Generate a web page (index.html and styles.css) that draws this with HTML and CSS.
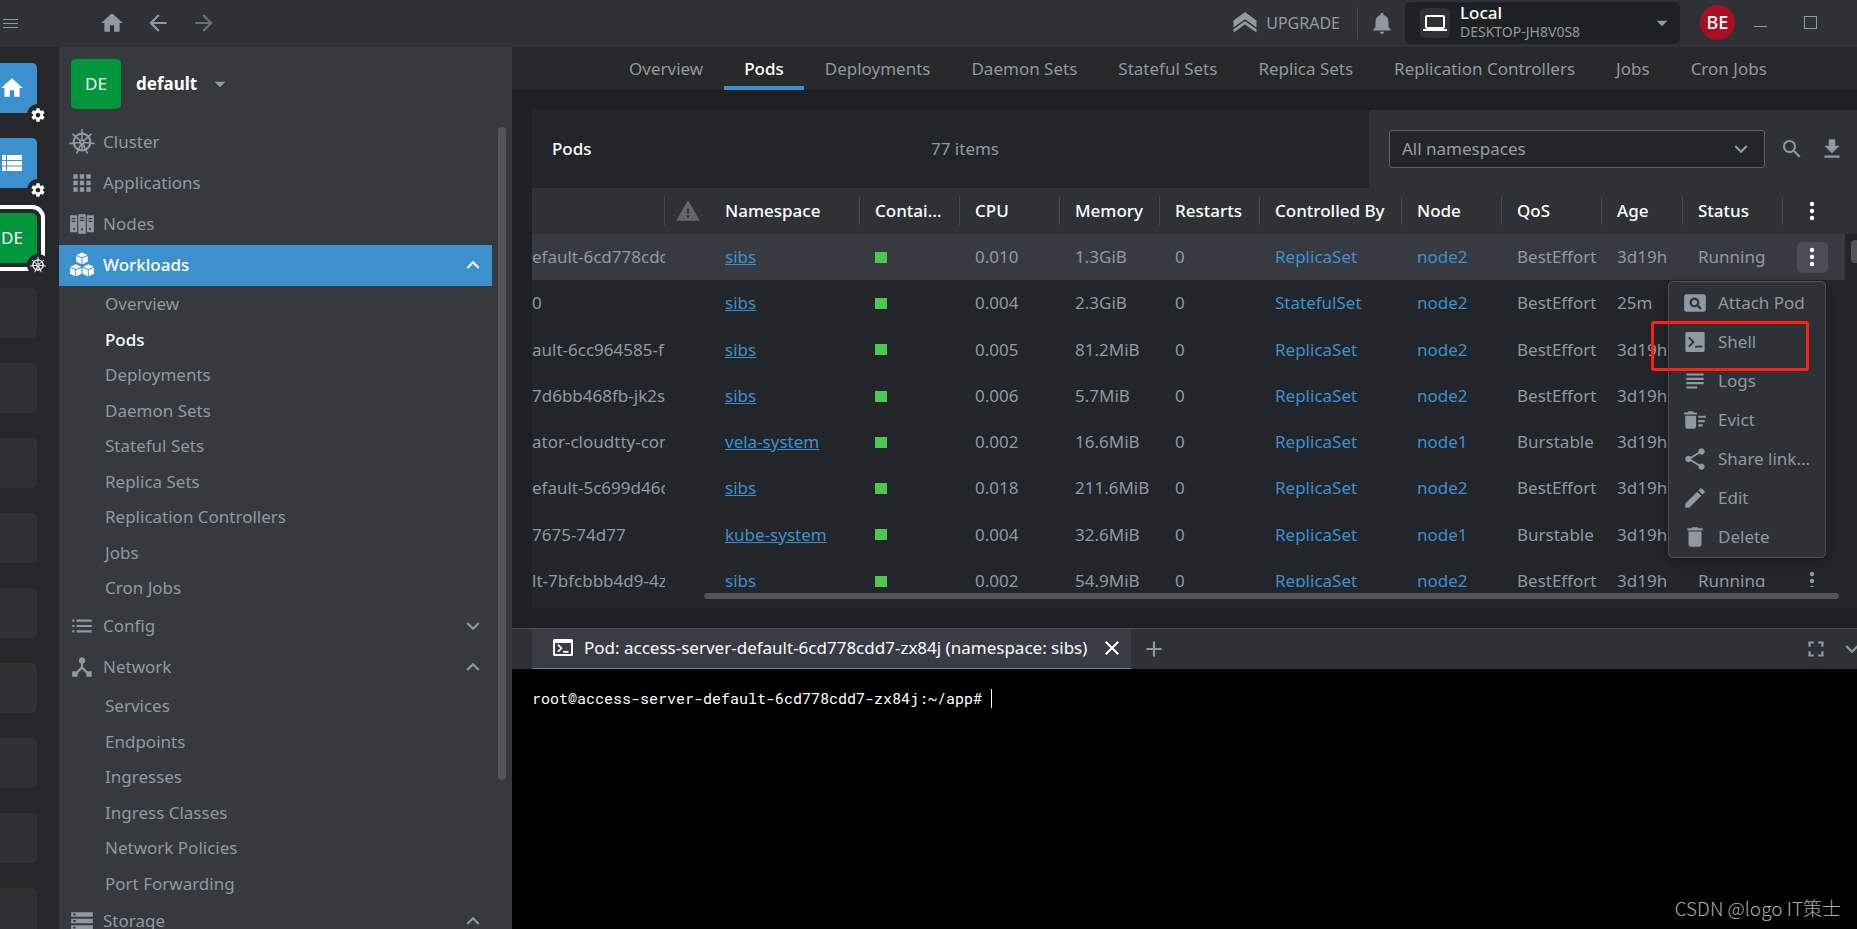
FILE: index.html
```html
<!DOCTYPE html>
<html lang="en">
<head>
<meta charset="utf-8">
<title>Pods - default</title>
<link rel="stylesheet" href="styles.css">
</head>
<body>
<svg class="sprite" aria-hidden="true">
  <symbol id="home" viewBox="0 0 24 24"><path d="M10 20v-6h4v6h5v-8h3L12 3 2 12h3v8z"/></symbol>
  <symbol id="back" viewBox="0 0 24 24"><path d="M20 11H7.83l5.59-5.59L12 4l-8 8 8 8 1.41-1.41L7.83 13H20z"/></symbol>
  <symbol id="forward" viewBox="0 0 24 24"><path d="M4 11h12.17l-5.59-5.59L12 4l8 8-8 8-1.41-1.41L16.17 13H4z"/></symbol>
  <symbol id="burger" viewBox="0 0 16 12"><path d="M0 2h15v1H0zM0 6h15v1H0zM0 10h15v1H0z"/></symbol>
  <symbol id="upgrade" viewBox="0 0 24 21"><path d="M12 0l11.500 8.500v7L12 7.200.5 15.500v-7z"/><path d="M12 9l11.500 8.300V20.500L12 12.600.5 20.500v-3.200z"/></symbol>
  <symbol id="bell" viewBox="0 0 24 24"><path d="M12 22c1.100 0 2-.9 2-2h-4c0 1.100.89 2 2 2zm6-6v-5c0-3.070-1.640-5.640-4.500-6.320V4c0-.83-.67-1.500-1.500-1.500s-1.500.67-1.500 1.500v.68C7.630 5.360 6 7.920 6 11v5l-2 2v1h16v-1l-2-2z"/></symbol>
  <symbol id="laptop" viewBox="0 0 24 24"><path d="M20 18c1.100 0 2-.9 2-2V6c0-1.100-.9-2-2-2H4c-1.100 0-2 .9-2 2v10c0 1.100.9 2 2 2H0v2h24v-2h-4zM4 6h16v10H4V6z"/></symbol>
  <symbol id="caret" viewBox="0 0 24 24"><path d="M7 10l5 5 5-5z"/></symbol>
  <symbol id="up" viewBox="0 0 24 24"><path d="M12 8l-6 6 1.410 1.410L12 10.830l4.590 4.580L18 14z"/></symbol>
  <symbol id="down" viewBox="0 0 24 24"><path d="M16.590 8.590L12 13.170 7.410 8.590 6 10l6 6 6-6z"/></symbol>
  <symbol id="gear" viewBox="0 0 24 24"><path d="M19.430 12.980c.04-.32.07-.64.07-.98s-.03-.66-.07-.98l2.110-1.650c.19-.15.24-.42.12-.64l-2-3.460c-.12-.22-.39-.3-.61-.22l-2.490 1c-.52-.4-1.080-.73-1.690-.98l-.38-2.650C14.460 2.180 14.250 2 14 2h-4c-.25 0-.46.18-.49.42l-.38 2.650c-.61.25-1.170.59-1.690.98l-2.490-1c-.23-.09-.49 0-.61.22l-2 3.460c-.13.22-.07.49.12.64l2.110 1.650c-.04.32-.07.65-.07.98s.03.66.07.98l-2.110 1.650c-.19.15-.24.42-.12.64l2 3.460c.12.22.39.3.61.22l2.490-1c.52.4 1.080.73 1.690.98l.38 2.650c.03.24.24.42.49.42h4c.25 0 .46-.18.49-.42l.38-2.650c.61-.25 1.170-.59 1.690-.98l2.490 1c.23.09.49 0 .61-.22l2-3.460c.12-.22.07-.49-.12-.64l-2.110-1.650zM12 15.500c-1.930 0-3.500-1.570-3.500-3.500s1.570-3.500 3.500-3.500 3.500 1.570 3.500 3.500-1.570 3.500-3.500 3.500z"/></symbol>
  <symbol id="rows" viewBox="0 0 24 24"><path d="M2 4h4v5H2zM7 4h15v5H7zM2 10h4v4.500H2zM7 10h15v4.500H7zM2 15.500h4V20H2zM7 15.500h15V20H7z"/></symbol>
  <symbol id="helm" viewBox="0 0 24 24"><g fill="none" stroke="currentColor"><circle cx="12" cy="12" r="7.700" stroke-width="2"/><circle cx="12" cy="12" r="1.800" stroke-width="1.600"/><path stroke-width="1.500" d="M12 0v10M12 14v6M3.200 4.600l7.200 6.100M20.800 4.600l-7.200 6.100M.3 13.500l9.800-1.100M23.700 13.500l-9.800-1.100M7 22.800l4.100-9M17 22.800l-4.100-9"/></g></symbol>
  <symbol id="apps" viewBox="0 0 24 24"><path d="M4 8h4V4H4v4zm6 12h4v-4h-4v4zm-6 0h4v-4H4v4zm0-6h4v-4H4v4zm6 0h4v-4h-4v4zm6-10v4h4V4h-4zm-6 4h4V4h-4v4zm6 6h4v-4h-4v4zm0 6h4v-4h-4v4z"/></symbol>
  <symbol id="nodes" viewBox="0 0 24 24"><path fill-rule="evenodd" d="M1 4h6.500v15.500H1zM2.500 6.500v1.200h3.500V6.500zM2.500 9v1.200h3.500V9zM4 15.500v2h1.500v-2zM8.500 3h7v18h-7zM10 5.500v1.200h4V5.500zM10 8v1.200h4V8zM11.300 16v2h1.500v-2zM16.500 4H23v15.500h-6.500zM18 6.500v1.200h3.500V6.500zM18 9v1.200h3.500V9zM18.500 15.500v2H20v-2z"/></symbol>
  <symbol id="cubes" viewBox="0 0 24 24"><path d="M12 .5l5 2.300-5 2.300-5-2.300zM6.700 3.600l4.900 2.200v5.600L6.700 9.100zM17.300 3.600l-4.900 2.200v5.600l4.900-2.300zM6.200 11.300l5 2.300-5 2.300-5-2.300zM.9 14.500l4.900 2.200v5.700L.9 20.100zM11.500 14.500l-4.900 2.200v5.700l4.900-2.300zM17.800 11.300l5 2.300-5 2.300-5-2.300zM12.500 14.500l4.900 2.200v5.700l-4.900-2.300zM23.100 14.500l-4.900 2.200v5.700l4.900-2.300z"/></symbol>
  <symbol id="list" viewBox="0 0 24 24"><path d="M3 6h2v2H3zM3 11h2v2H3zM3 16h2v2H3zM7 6h14v2H7zM7 11h14v2H7zM7 16h14v2H7z"/></symbol>
  <symbol id="hub" viewBox="0 0 24 24"><path d="M17 16l-4-4V8.820C14.160 8.400 15 7.300 15 6c0-1.660-1.340-3-3-3S9 4.340 9 6c0 1.300.84 2.400 2 2.820V12l-4 4H3v5h5v-3.050l4-4.200 4 4.200V21h5v-5h-4z"/></symbol>
  <symbol id="storage" viewBox="0 0 24 24"><path d="M2 20h20v-4H2v4zm2-3h2v2H4v-2zM2 4v4h20V4H2zm4 3H4V5h2v2zm-4 7h20v-4H2v4zm2-3h2v2H4v-2z"/></symbol>
  <symbol id="warning" viewBox="0 0 24 24"><path d="M1 21h22L12 2 1 21zm12-3h-2v-2h2v2zm0-4h-2v-4h2v4z"/></symbol>
  <symbol id="search" viewBox="0 0 24 24"><path d="M15.500 14h-.79l-.28-.27C15.410 12.590 16 11.110 16 9.500 16 5.910 13.090 3 9.500 3S3 5.910 3 9.500 5.910 16 9.500 16c1.610 0 3.090-.59 4.230-1.570l.27.28v.79l5 4.990L20.490 19l-4.990-5zm-6 0C7.010 14 5 11.990 5 9.500S7.010 5 9.500 5 14 7.010 14 9.500 11.990 14 9.500 14z"/></symbol>
  <symbol id="download" viewBox="0 0 24 24"><path d="M19 9h-4V3H9v6H5l7 7 7-7zM5 18v2h14v-2H5z"/></symbol>
  <symbol id="kebab" viewBox="0 0 24 24"><circle cx="12" cy="5" r="2.200"/><circle cx="12" cy="12" r="2.200"/><circle cx="12" cy="19" r="2.200"/></symbol>
  <symbol id="attach" viewBox="0 0 24 24"><path d="M11.500 9C10.120 9 9 10.120 9 11.500s1.120 2.500 2.500 2.500 2.500-1.120 2.500-2.500S12.880 9 11.500 9zM20 4H4c-1.100 0-2 .9-2 2v12c0 1.100.9 2 2 2h16c1.100 0 2-.9 2-2V6c0-1.100-.9-2-2-2zm-3.210 14.210l-2.910-2.910c-.69.44-1.510.7-2.390.7C9.010 16 7 13.990 7 11.500S9.010 7 11.500 7 16 9.010 16 11.500c0 .88-.26 1.690-.7 2.390l2.910 2.900-1.420 1.420z"/></symbol>
  <symbol id="shell" viewBox="0 0 24 24"><path fill-rule="evenodd" d="M3 1h18a1.500 1.500 0 0 1 1.500 1.500v19A1.500 1.500 0 0 1 21 23H3a1.500 1.500 0 0 1-1.500-1.500v-19A1.500 1.500 0 0 1 3 1zM6 6.200L4.600 7.600 9 12l-4.400 4.400L6 17.800l5.800-5.800zM12 16v2h8v-2z"/></symbol>
  <symbol id="subject" viewBox="0 0 24 24"><path d="M14 17H4v2h10v-2zm6-8H4v2h16V9zM4 15h16v-2H4v2zM4 5v2h16V5H4z"/></symbol>
  <symbol id="evict" viewBox="0 0 24 24"><path d="M15 16h4v2h-4zm0-8h7v2h-7zm0 4h6v2h-6zM3 18c0 1.100.9 2 2 2h6c1.100 0 2-.9 2-2V8H3v10zM14 5h-3l-1-1H6L5 5H2v2h12z"/></symbol>
  <symbol id="share" viewBox="0 0 24 24"><path d="M18 16.080c-.76 0-1.440.3-1.960.77L8.910 12.700c.05-.23.09-.46.09-.7s-.04-.47-.09-.7l7.050-4.110c.54.5 1.250.81 2.040.81 1.660 0 3-1.340 3-3s-1.340-3-3-3-3 1.340-3 3c0 .24.04.47.09.7L8.040 9.810C7.500 9.310 6.790 9 6 9c-1.660 0-3 1.340-3 3s1.340 3 3 3c.79 0 1.500-.31 2.040-.81l7.120 4.160c-.05.21-.08.43-.08.65 0 1.610 1.310 2.920 2.920 2.920s2.920-1.310 2.920-2.920-1.310-2.920-2.920-2.920z"/></symbol>
  <symbol id="edit" viewBox="0 0 24 24"><path d="M3 17.250V21h3.750L17.810 9.940l-3.750-3.750L3 17.250zM20.710 7.040c.39-.39.39-1.020 0-1.410l-2.340-2.340c-.39-.39-1.020-.39-1.410 0l-1.830 1.830 3.750 3.750 1.830-1.830z"/></symbol>
  <symbol id="trash" viewBox="0 0 24 24"><path d="M6 19c0 1.100.9 2 2 2h8c1.100 0 2-.9 2-2V7H6v12zM19 4h-3.500l-1-1h-5l-1 1H5v2h14V4z"/></symbol>
  <symbol id="terminal" viewBox="0 0 20 17"><path fill-rule="evenodd" d="M1.500 0h17A1.500 1.500 0 0 1 20 1.500v14a1.500 1.500 0 0 1-1.500 1.500h-17A1.500 1.500 0 0 1 0 15.500v-14A1.500 1.500 0 0 1 1.500 0zM2 4v11h16V4z"/><path d="M4.400 6.200l1.200-1.200L9.600 9.200l-4 4-1.200-1.200 2.800-2.800zM10 12h5.500v1.700H10z"/></symbol>
  <symbol id="close" viewBox="0 0 24 24"><path d="M19 6.410L17.590 5 12 10.590 6.410 5 5 6.410 10.590 12 5 17.590 6.410 19 12 13.410 17.590 19 19 17.590 13.410 12z"/></symbol>
  <symbol id="plus" viewBox="0 0 24 24"><path d="M19 13h-6v6h-2v-6H5v-2h6V5h2v6h6z"/></symbol>
  <symbol id="full" viewBox="0 0 24 24"><path d="M7 14H5v5h5v-2H7v-3zm-2-4h2V7h3V5H5v5zm12 7h-3v2h5v-5h-2v3zM14 5v2h3v3h2V5h-5z"/></symbol>
</svg>

<div class="app">
  <header class="topbar">
    <button class="icon-btn burger" aria-label="Menu"><svg><use href="#burger"/></svg></button>
    <nav class="history">
      <button class="icon-btn" aria-label="Home"><svg class="i26"><use href="#home"/></svg></button>
      <button class="icon-btn" aria-label="Back"><svg class="i26"><use href="#back"/></svg></button>
      <button class="icon-btn dim" aria-label="Forward" disabled><svg class="i26"><use href="#forward"/></svg></button>
    </nav>
    <button class="icon-btn upgrade"><svg><use href="#upgrade"/></svg>UPGRADE</button>
    <button class="icon-btn bell" aria-label="Notifications"><svg class="i26"><use href="#bell"/></svg></button>
    <button class="icon-btn host">
      <span class="host-icon"><svg class="i24"><use href="#laptop"/></svg></span>
      <span class="host-text"><b>Local</b><small>DESKTOP-JH8V0S8</small></span>
      <svg class="i26"><use href="#caret"/></svg>
    </button>
    <button class="icon-btn avatar">BE</button>
    <div class="window">
      <button class="icon-btn" aria-label="Minimize"><i class="min"></i></button>
      <button class="icon-btn" aria-label="Maximize"><i class="max"></i></button>
      <button class="icon-btn" aria-label="Close"><svg class="i20"><use href="#close"/></svg></button>
    </div>
  </header>

  <aside class="hotbar">
    <a class="cell blue" href="#catalog" aria-label="Catalog"><svg class="i26"><use href="#home"/></svg><span class="badge"><svg><use href="#gear"/></svg></span></a>
    <a class="cell blue" href="#list" aria-label="List"><svg class="i24"><use href="#rows"/></svg><span class="badge"><svg><use href="#gear"/></svg></span></a>
    <a class="cell green current" href="#default">DE<span class="badge"><svg><use href="#helm"/></svg></span></a>
    <div class="cell"></div><div class="cell"></div><div class="cell"></div><div class="cell"></div><div class="cell"></div>
    <div class="cell"></div><div class="cell"></div><div class="cell"></div><div class="cell"></div>
  </aside>

  <aside class="sidebar">
    <button class="icon-btn cluster"><span class="logo">DE</span><b>default</b><svg class="i26"><use href="#caret"/></svg></button>
    <nav class="tree">
      <a class="item" href="#cluster"><svg class="i26"><use href="#helm"/></svg>Cluster</a>
      <a class="item" href="#applications"><svg class="i26"><use href="#apps"/></svg>Applications</a>
      <a class="item" href="#nodes"><svg class="i26"><use href="#nodes"/></svg>Nodes</a>
      <a class="item active" href="#workloads"><svg class="i26"><use href="#cubes"/></svg>Workloads<svg class="i26 chev"><use href="#up"/></svg></a>
      <ul class="sub">
        <li><a href="#overview">Overview</a></li>
        <li><a class="on" href="#pods">Pods</a></li>
        <li><a href="#deployments">Deployments</a></li>
        <li><a href="#daemonsets">Daemon Sets</a></li>
        <li><a href="#statefulsets">Stateful Sets</a></li>
        <li><a href="#replicasets">Replica Sets</a></li>
        <li><a href="#rc">Replication Controllers</a></li>
        <li><a href="#jobs">Jobs</a></li>
        <li><a href="#cronjobs">Cron Jobs</a></li>
      </ul>
      <a class="item" href="#config"><svg class="i26"><use href="#list"/></svg>Config<svg class="i26 chev"><use href="#down"/></svg></a>
      <a class="item" href="#network"><svg class="i26"><use href="#hub"/></svg>Network<svg class="i26 chev"><use href="#up"/></svg></a>
      <ul class="sub">
        <li><a href="#services">Services</a></li>
        <li><a href="#endpoints">Endpoints</a></li>
        <li><a href="#ingresses">Ingresses</a></li>
        <li><a href="#ingressclasses">Ingress Classes</a></li>
        <li><a href="#policies">Network Policies</a></li>
        <li><a href="#portforwarding">Port Forwarding</a></li>
      </ul>
      <a class="item" href="#storage"><svg class="i26"><use href="#storage"/></svg>Storage<svg class="i26 chev"><use href="#up"/></svg></a>
    </nav>
    <span class="side-thumb"></span>
  </aside>

  <main class="main">
    <nav class="tabs">
      <a href="#overview">Overview</a><a class="on" href="#pods">Pods</a><a href="#deployments">Deployments</a><a href="#daemonsets">Daemon Sets</a><a href="#statefulsets">Stateful Sets</a><a href="#replicasets">Replica Sets</a><a href="#rc">Replication Controllers</a><a href="#jobs">Jobs</a><a href="#cronjobs">Cron Jobs</a>
    </nav>

    <section class="content">
      <div class="panel">
        <div class="panel-head">
          <div class="info"><h1>Pods</h1><span>77 items</span></div>
          <div class="filters">
            <div class="select">
              <select aria-label="Namespace"><option>All namespaces</option></select>
              <svg class="i26"><use href="#down"/></svg>
            </div>
            <button class="icon-btn" aria-label="Search"><svg class="i24"><use href="#search"/></svg></button>
            <button class="icon-btn" aria-label="Download"><svg class="i26"><use href="#download"/></svg></button>
          </div>
        </div>

        <div class="viewport">
          <table>
            <colgroup><col class="c-name"><col class="c-warn"><col class="c-ns"><col class="c-std"><col class="c-std"><col class="c-std"><col class="c-std"><col class="c-ctl"><col class="c-std"><col class="c-std"><col class="c-age"><col class="c-std"><col class="c-menu"></colgroup>
            <thead><tr><th></th><th class="warn"><svg class="i26"><use href="#warning"/></svg></th><th>Namespace</th><th class="tight">Containers</th><th>CPU</th><th>Memory</th><th>Restarts</th><th>Controlled By</th><th>Node</th><th>QoS</th><th>Age</th><th>Status</th><th class="act"><button class="icon-btn" aria-label="Columns"><svg class="i24"><use href="#kebab"/></svg></button></th></tr></thead>
            <tbody>
              <tr class="hover"><td>efault-6cd778cdd7</td><td></td><td><a class="ns" href="#sibs">sibs</a></td><td><i class="ok"></i></td><td>0.010</td><td>1.3GiB</td><td>0</td><td><a href="#rs">ReplicaSet</a></td><td><a href="#node2">node2</a></td><td>BestEffort</td><td>3d19h</td><td>Running</td><td class="act"><button class="icon-btn open" aria-label="Pod menu"><svg class="i24"><use href="#kebab"/></svg></button></td></tr>
              <tr><td>0</td><td></td><td><a class="ns" href="#sibs">sibs</a></td><td><i class="ok"></i></td><td>0.004</td><td>2.3GiB</td><td>0</td><td><a href="#ss">StatefulSet</a></td><td><a href="#node2">node2</a></td><td>BestEffort</td><td>25m</td><td></td><td></td></tr>
              <tr><td>ault-6cc964585-f</td><td></td><td><a class="ns" href="#sibs">sibs</a></td><td><i class="ok"></i></td><td>0.005</td><td>81.2MiB</td><td>0</td><td><a href="#rs">ReplicaSet</a></td><td><a href="#node2">node2</a></td><td>BestEffort</td><td>3d19h</td><td></td><td></td></tr>
              <tr><td>7d6bb468fb-jk2sz</td><td></td><td><a class="ns" href="#sibs">sibs</a></td><td><i class="ok"></i></td><td>0.006</td><td>5.7MiB</td><td>0</td><td><a href="#rs">ReplicaSet</a></td><td><a href="#node2">node2</a></td><td>BestEffort</td><td>3d19h</td><td></td><td></td></tr>
              <tr><td>ator-cloudtty-con</td><td></td><td><a class="ns" href="#vela">vela-system</a></td><td><i class="ok"></i></td><td>0.002</td><td>16.6MiB</td><td>0</td><td><a href="#rs">ReplicaSet</a></td><td><a href="#node1">node1</a></td><td>Burstable</td><td>3d19h</td><td></td><td></td></tr>
              <tr><td>efault-5c699d46d</td><td></td><td><a class="ns" href="#sibs">sibs</a></td><td><i class="ok"></i></td><td>0.018</td><td>211.6MiB</td><td>0</td><td><a href="#rs">ReplicaSet</a></td><td><a href="#node2">node2</a></td><td>BestEffort</td><td>3d19h</td><td></td><td></td></tr>
              <tr><td>7675-74d77</td><td></td><td><a class="ns" href="#kube">kube-system</a></td><td><i class="ok"></i></td><td>0.004</td><td>32.6MiB</td><td>0</td><td><a href="#rs">ReplicaSet</a></td><td><a href="#node1">node1</a></td><td>Burstable</td><td>3d19h</td><td></td><td></td></tr>
              <tr><td>lt-7bfcbbb4d9-4z</td><td></td><td><a class="ns" href="#sibs">sibs</a></td><td><i class="ok"></i></td><td>0.002</td><td>54.9MiB</td><td>0</td><td><a href="#rs">ReplicaSet</a></td><td><a href="#node2">node2</a></td><td>BestEffort</td><td>3d19h</td><td>Running</td><td class="act"><button class="icon-btn" aria-label="Pod menu"><svg class="i24"><use href="#kebab"/></svg></button></td></tr>
            </tbody>
          </table>
          <div class="gutter"><span></span></div>
        </div>
        <div class="hscroll"><span></span></div>
      </div>
    </section>

    <section class="dock">
      <div class="dock-bar">
        <div class="dock-tab"><svg class="term-icon"><use href="#terminal"/></svg><span>Pod: access-server-default-6cd778cdd7-zx84j (namespace: sibs)</span><button class="icon-btn" aria-label="Close tab"><svg class="i24"><use href="#close"/></svg></button></div>
        <button class="icon-btn add" aria-label="New tab"><svg class="i26"><use href="#plus"/></svg></button>
        <div class="dock-actions">
          <button class="icon-btn" aria-label="Fullscreen"><svg class="i26"><use href="#full"/></svg></button>
          <button class="icon-btn" aria-label="Collapse"><svg class="i26"><use href="#down"/></svg></button>
        </div>
      </div>
      <div class="terminal"><pre>root@access-server-default-6cd778cdd7-zx84j:~/app# <span class="cursor"></span></pre><p class="mark">CSDN @logo IT策士</p></div>
    </section>

    <div class="menu">
      <button><svg class="i26"><use href="#attach"/></svg>Attach Pod</button>
      <button><svg class="i22"><use href="#shell"/></svg>Shell</button>
      <button><svg class="i26"><use href="#subject"/></svg>Logs</button>
      <button><svg class="i26"><use href="#evict"/></svg>Evict</button>
      <button><svg class="i26"><use href="#share"/></svg>Share link...</button>
      <button><svg class="i26"><use href="#edit"/></svg>Edit</button>
      <button><svg class="i26"><use href="#trash"/></svg>Delete</button>
      <span class="outline"></span>
    </div>
  </main>
</div>
</body>
</html>
```
FILE: styles.css
```css
* { box-sizing: border-box; }
:root {
  --text: #8e99a3;
  --blue: #3d90ce;
  --bar: #2e3136;
  --side: #36393e;
  --deep: #252729;
  --panel: #22252a;
  --page: #1e2124;
}
body {
  margin: 0;
  font: 17px/24px "Noto Sans", "Open Sans", sans-serif;
  color: var(--text);
  background: var(--page);
}
a { color: inherit; text-decoration: none; }
svg { display: block; flex: none; fill: currentColor; }
.sprite { position: absolute; width: 0; height: 0; }
.i20 { width: 20px; height: 20px; }
.i22 { width: 22px; height: 22px; }
.i24 { width: 24px; height: 24px; }
.i26 { width: 26px; height: 26px; }
.icon-btn {
  display: flex; align-items: center; justify-content: center; flex: none;
  padding: 0; border: 0; background: none; color: inherit; font: inherit;
}
.app {
  display: grid;
  grid-template: 47px minmax(0, 1fr) / 59px 453px minmax(0, 1fr);
  height: 100vh; overflow: hidden;
}

/* top bar */
.topbar {
  grid-column: 1 / -1; display: flex; align-items: center;
  background: var(--bar); overflow: hidden; padding-bottom: 2px;
}
.burger svg { width: 16px; height: 12px; }
.burger { margin-left: 3px; width: 15px; }
.history { display: flex; gap: 20px; margin-left: 81px; margin-right: auto; }
.dim { opacity: .6; }
.upgrade { gap: 9px; font-size: 16px; color: #949a9f; padding-right: 17px; border-right: 1px solid #45494e; height: 32px; }
.upgrade svg { width: 24px; height: 21px; }
.bell { margin: 0 10px 0 11px; }
.host {
  width: 275px; height: 42px; padding: 0 5px 0 15px; gap: 10px;
  background: var(--page); border-radius: 5px;
}
.host-icon {
  display: grid; place-items: center; width: 30px; height: 30px;
  background: var(--bar); border-radius: 5px; color: #fff;
}
.host-text { display: grid; flex: 1; padding-bottom: 2px; text-align: left; }
.host-text b { font-weight: 500; line-height: 20px; color: #fff; }
.host-text small { font-size: 14px; line-height: 18px; }
.avatar {
  width: 35px; height: 35px; margin-left: 20px; padding-bottom: 2px; border-radius: 50%;
  background: #a90e22; color: #fff; font-weight: 500; font-size: 18px;
}
.window { display: flex; align-items: center; margin-left: 19px; margin-right: -17px; gap: 37px; }
.min { display: block; width: 13px; height: 8px; border-bottom: 1px solid; }
.max { display: block; width: 13px; height: 13px; border: 1px solid; }

/* hotbar */
.hotbar {
  display: flex; flex-direction: column; gap: 25px; padding-top: 16px;
  background: var(--deep); overflow: hidden;
}
.cell {
  position: relative; flex: none; display: flex; align-items: center; justify-content: center;
  width: 50px; height: 50px; margin-left: -13px; border-radius: 5px; background: var(--bar);
  color: #fff;
}
.blue { background: var(--blue); }
.green { background: #00963b; }
.current { box-shadow: 0 0 0 4px var(--deep), 0 0 0 8px #fff; }
.badge {
  position: absolute; right: -12px; bottom: -13px; display: grid; place-items: center;
  width: 22px; height: 22px; border-radius: 50%; background: var(--deep);
}
.badge svg { width: 16px; height: 16px; }

/* sidebar */
.sidebar { position: relative; background: var(--side); overflow: hidden; }
.cluster { padding: 12px; gap: 15px; color: var(--text); }
.cluster b { color: #fff; font-size: 17px; }
.cluster svg { margin-left: -5px; }
.logo {
  display: grid; place-items: center; width: 50px; height: 50px;
  border-radius: 5px; background: #00963b; color: #fff;
}
.tree { margin-right: 20px; padding-top: 1px; }
.item { display: flex; align-items: center; gap: 8px; height: 41px; padding: 0 6px 2px 10px; }
.item .chev { margin-left: auto; }
.item.active { background: var(--blue); color: #fff; font-weight: 500; }
.sub { list-style: none; margin: 0; padding: 0 0 0 46px; }
.sub li { line-height: 35px; }
.sub li:nth-child(odd) { line-height: 36px; }
.sub a { display: block; }
.sub .on { color: #fff; font-weight: 500; }
.side-thumb {
  position: absolute; right: 6px; top: 80px; bottom: 149px; width: 8px;
  border-radius: 4px; background: #535458;
}

/* main */
.main { position: relative; display: flex; flex-direction: column; min-width: 0; }
.tabs { display: flex; gap: 1px; height: 43px; padding-left: 97px; background: #262829; }
.tabs a { padding: 10px 20px 5px; border-bottom: 4px solid transparent; white-space: nowrap; }
.tabs .on { color: #fff; font-weight: 500; border-color: var(--blue); }
.content { flex: 1; min-height: 0; display: flex; padding: 20px 0 20px 20px; }
.panel { flex: 1; min-width: 0; display: flex; flex-direction: column; background: var(--panel); }
.panel-head { display: flex; height: 78px; }
.info { flex: 1; display: grid; grid-template-columns: 379px 1fr; align-items: center; padding-left: 20px; }
.info h1 { margin: 0; font-size: 17px; font-weight: 500; color: #fff; }
.filters { display: flex; align-items: center; width: 488px; padding: 0 12px 0 20px; gap: 15px; background: var(--bar); }
.select { position: relative; flex: 1; }
.select select {
  appearance: none; display: block; width: 100%; height: 38px; padding: 0 12px;
  border: 1px solid #5c5f64; border-radius: 3px; background: var(--panel);
  color: #9a9d9f; font: inherit;
}
.select svg { position: absolute; right: 11px; top: 6px; pointer-events: none; }

.viewport { position: relative; flex: 1; min-height: 0; overflow: hidden; }
table { width: 100%; table-layout: fixed; border-collapse: collapse; }
.c-name { width: 133px; } .c-warn { width: 45px; } .c-ns { width: 150px; }
.c-std { width: 100px; } .c-ctl { width: 142px; } .c-age { width: 81px; } .c-menu { width: 74px; }
th, td {
  height: 46px; padding: 0 5px 0 15px; text-align: left; font-weight: 400;
  white-space: nowrap; overflow: hidden;
}
tbody tr:nth-child(4n + 3) td { height: 47px; }
td:first-child { padding: 0; }
th {
  color: #fff; font-weight: 500; text-overflow: ellipsis; background-color: var(--bar);
  background-image: linear-gradient(#45484d, #45484d); background-size: 1px 28px;
  background-position: right center; background-repeat: no-repeat;
}
th.tight { padding-right: 15px; }
th.warn { padding: 0 0 0 10px; color: #62656a; background-image: none; }
th.act { background-image: none; }
td.act, th.act { padding: 0 16px 0 0; }
.act .icon-btn { width: 31px; height: 31px; margin: 0 auto; border-radius: 5px; }
.hover { background: #383a42; }
.act .open { background: #4a4d55; color: #fff; }
td a { color: var(--blue); }
.ns { text-decoration: underline; }
.ok { display: block; width: 12px; height: 11px; background: #4cc74f; }
.gutter { position: absolute; right: 0; top: 46px; bottom: 0; width: 12px; padding: 6px 0 0 6px; background: var(--panel); overflow: hidden; }
.gutter span { display: block; width: 8px; height: 23px; border-radius: 4px; background: #535458; }
.hscroll { height: 21px; padding: 6px 18px 0 172px; }
.hscroll span { display: block; height: 6px; border-radius: 3px; background: #535458; }

/* dock */
.dock { height: 301px; display: flex; flex-direction: column; border-top: 1px solid #4a4f52; background: #000; }
.dock-bar { display: flex; align-items: center; height: 40px; padding-left: 20px; background: var(--bar); overflow: hidden; }
.dock-tab {
  display: flex; align-items: center; height: 40px; padding: 0 7px 2px 21px; gap: 11px;
  background: #393c44; border-bottom: 1px solid var(--blue); color: #fff;
}
.dock-tab .icon-btn { margin-left: 2px; }
.term-icon { width: 20px; height: 17px; }
.add { margin-left: 10px; }
.dock-actions { display: flex; gap: 10px; margin-left: auto; margin-right: -8px; }
.terminal { flex: 1; display: flex; flex-direction: column; justify-content: space-between; padding: 17px 16px 6px 20px; }
pre { display: flex; margin: 0; font: 15px/24px "Roboto Mono", "DejaVu Sans Mono", monospace; color: #fff; }
.cursor { width: 1px; height: 19px; margin-top: 3px; background: #fff; }
.mark { margin: 0; text-align: right; font: 300 19px/30px "Noto Sans CJK SC", sans-serif; color: #acacac; }

/* context menu */
.menu {
  position: absolute; right: 31px; top: 234px; width: 158px; padding: 1px 0;
  background: var(--bar); border: 1px solid #4d5054; border-radius: 5px;
  box-shadow: 0 4px 12px rgba(0, 0, 0, .3);
}
.menu button {
  display: grid; grid-template-columns: 26px 1fr; align-items: center; justify-items: start; column-gap: 10px;
  width: 100%; height: 39px; padding: 0 0 0 13px; border: 0; background: none;
  color: inherit; font: inherit; text-align: left; white-space: nowrap;
}
.menu svg { justify-self: center; }
.outline { position: absolute; left: -18px; top: 39px; width: 158px; height: 50px; border: 3px solid #ff2011; border-radius: 3px; pointer-events: none; }
```
